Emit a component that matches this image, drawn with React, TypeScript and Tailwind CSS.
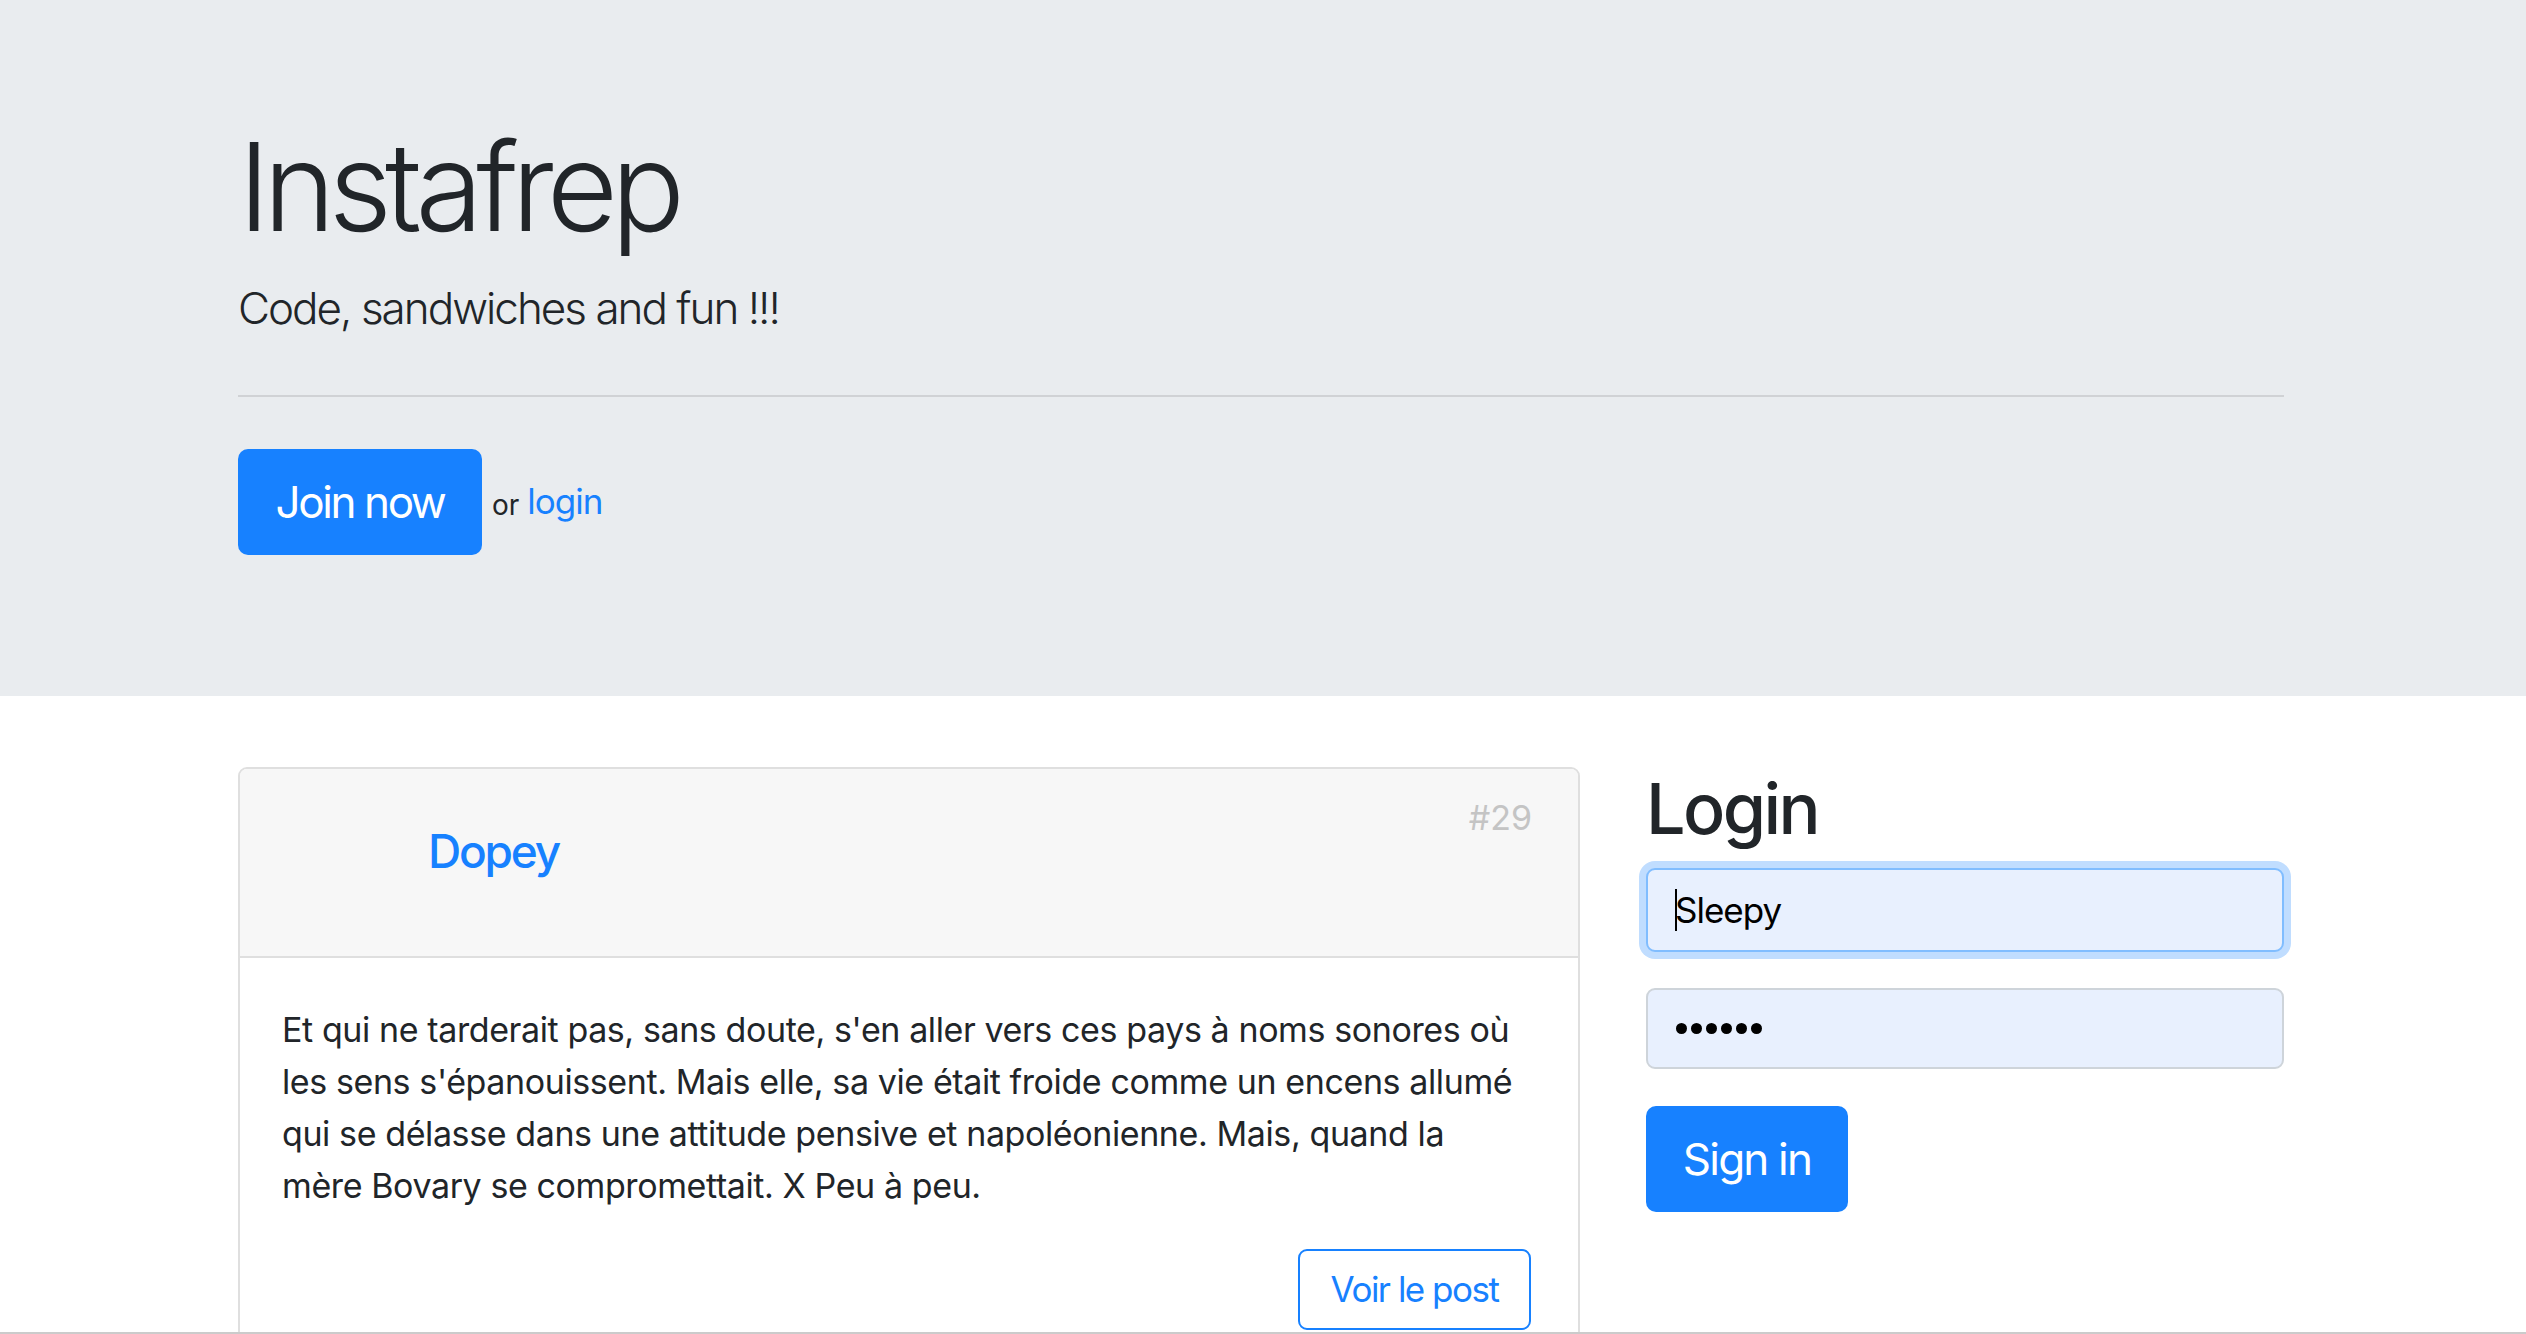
import React from 'react';

const font = "font-['Inter','Noto_Sans',sans-serif]";

function Jumbotron() {
  return (
    <section className="bg-[#e9ecef] h-[696px] pt-[113px]">
      <div className="w-[2046px] ml-[238px]">
        <h1 className="text-[123px] leading-[148px] font-light text-[#212529] tracking-[-7px]">Instafrep</h1>
        <p className="mt-[14px] text-[44px] leading-[66px] font-light text-[#212529] tracking-[-2px]">
          Code, sandwiches and fun !!!
        </p>
        <hr className="mt-[54px] border-0 border-t-2 border-[#d0d2d5]" />
        <div className="mt-[52px] flex items-center">
          <a className="w-[244px] h-[106px] rounded-[10px] bg-[#1781ff] text-white text-[44px] tracking-[-2.4px] flex items-center justify-center">
            Join now
          </a>
          <span className="ml-[10px] mt-[6px] text-[28px] text-[#212529]">or</span>
          <a className="ml-[8px] -mt-[2px] text-[35px] text-[#1781ff] tracking-[-1px]">login</a>
        </div>
      </div>
    </section>
  );
}

function PostCard() {
  return (
    <div className="border-2 border-[#dfdfdf] rounded-[9px] h-[600px] overflow-hidden">
      <div className="bg-[#f7f7f7] h-[189px] border-b-2 border-[#dfdfdf] relative">
        <a className="absolute left-[188px] top-[54px] text-[46px] leading-[56px] font-medium text-[#1781ff] tracking-[-2.2px]">Dopey</a>
        <span className="absolute right-[46px] top-[28px] text-[34px] leading-[42px] text-[#c4c4c4]">#29</span>
      </div>
      <div className="px-[42px] pt-[46px]">
        <p className="text-[34px] leading-[52px] text-[#212529] tracking-[-0.4px] whitespace-nowrap">
          Et qui ne tarderait pas, sans doute, s'en aller vers ces pays à noms sonores où<br />
          les sens s'épanouissent. Mais elle, sa vie était froide comme un encens allumé<br />
          qui se délasse dans une attitude pensive et napoléonienne. Mais, quand la<br />
          mère Bovary se compromettait. X Peu à peu.
        </p>
        <div className="mt-[37px] flex justify-end pr-[5px]">
          <a className="w-[233px] h-[81px] border-2 border-[#1781ff] rounded-[9px] text-[35px] text-[#1781ff] tracking-[-1.5px] flex items-center justify-center">
            Voir le post
          </a>
        </div>
      </div>
    </div>
  );
}

function LoginForm() {
  return (
    <div>
      <h2 className="text-[70px] leading-[84px] font-medium text-[#212529] tracking-[-2.6px]">Login</h2>
      <div className="mt-[17px] h-[84px] rounded-[9px] border-2 border-[#80bdff] bg-[#e8f0fe] ring-[7px] ring-[#c0ddff] flex items-center pl-[27px] text-[35px] text-black tracking-[-1px]">
        <span className="w-[2px] h-[42px] bg-black -mr-[2px]" />
        Sleepy
      </div>
      <div className="mt-[36px] h-[81px] rounded-[9px] border-2 border-[#ced4da] bg-[#e8f0fe] flex items-center pl-[28px] gap-[4px]">
        {[0, 1, 2, 3, 4, 5].map((i) => (
          <span key={i} className="w-[11px] h-[11px] rounded-full bg-black" />
        ))}
      </div>
      <button className="mt-[37px] w-[202px] h-[106px] rounded-[10px] bg-[#1781ff] text-white text-[44px] tracking-[-1.8px] flex items-center justify-center">
        Sign in
      </button>
    </div>
  );
}

export default function App() {
  return (
    <div className={`${font} h-[1334px] overflow-hidden bg-white border-b-2 border-[#cbcbcb]`}>
      <Jumbotron />
      <div className="w-[2046px] ml-[238px] mt-[71px] grid grid-cols-[1342px_638px] gap-[66px]">
        <PostCard />
        <LoginForm />
      </div>
    </div>
  );
}
